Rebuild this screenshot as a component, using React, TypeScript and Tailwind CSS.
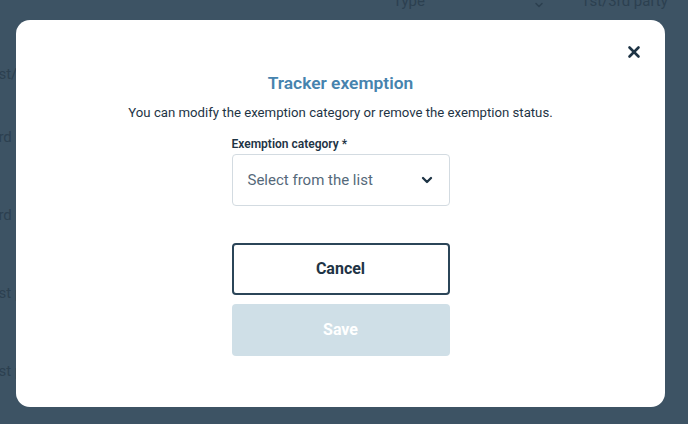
import { X, ChevronDown } from 'lucide-react'

const rows = ['3rd party', '3rd party', '1st party', '1st party']

export default function App() {
  return (
    <div className="relative h-[424px] w-[688px] overflow-hidden bg-[#3d5364] font-['Roboto',sans-serif]">
      {/* page behind the overlay */}
      <div className="flex h-full flex-col text-[15px] text-[#2c4050]">
        <div className="flex h-[10px] items-end gap-0 pl-[393px]">
          <span className="-mb-[2px] w-[140px]">Type</span>
          <ChevronDown size={12} strokeWidth={3} className="-mb-[1px]" />
          <span className="-mb-[2px] ml-[36px]">1st/3rd party</span>
        </div>
        <span className="-ml-[10px] mt-[53px] h-[18px]">1st/3rd party</span>
        <div className="mt-[45px] flex flex-col gap-[60px]">
          {rows.map((r, i) => (
            <span key={i} className="-ml-[10px] h-[18px]">{r}</span>
          ))}
        </div>
      </div>

      {/* modal */}
      <div className="absolute left-[16px] top-[20px] flex h-[387px] w-[649px] flex-col items-center rounded-[14px] bg-white pt-[51px]">
        <button className="absolute right-[22px] top-[23px] text-[#1e3445]">
          <X size={18} strokeWidth={3.5} />
        </button>
        <h2 className="text-[17.4px] font-semibold leading-[24px] text-[#4683ae]">Tracker exemption</h2>
        <p className="mt-[8px] text-[13.2px] leading-[20px] text-[#1e3445]">
          You can modify the exemption category or remove the exemption status.
        </p>
        <div className="mt-[14px] flex w-[218px] flex-col">
          <label className="text-[12px] font-semibold leading-[14px] text-[#1e3445]">Exemption category *</label>
          <div className="mt-[3px] flex h-[52px] items-center justify-between rounded-[4px] border border-[#d3dbe1] pl-[15px] pr-[14px]">
            <span className="text-[15px] text-[#55697a]">Select from the list</span>
            <ChevronDown size={16} strokeWidth={3.5} className="text-[#1e3445]" />
          </div>
          <button className="mt-[37px] h-[52px] rounded-[4px] border-2 border-[#2b4558] text-[16px] font-bold text-[#1e3445]">
            Cancel
          </button>
          <button className="mt-[9px] h-[52px] rounded-[4px] bg-[#cfdfe7] text-[16px] font-bold text-white">
            Save
          </button>
        </div>
      </div>
    </div>
  )
}
